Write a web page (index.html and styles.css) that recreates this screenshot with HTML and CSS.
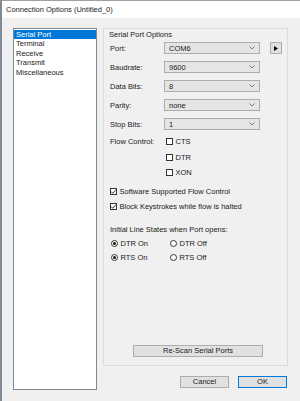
FILE: index.html
```html
<!DOCTYPE html>
<html>
<head>
<meta charset="utf-8">
<link rel="stylesheet" href="styles.css">
</head>
<body>
<div class="window">
  <div class="titlebar">Connection Options (Untitled_0)</div>
  <div class="content">
    <div class="listbox">
      <div class="item selected">Serial Port</div>
      <div class="item">Terminal</div>
      <div class="item">Receive</div>
      <div class="item">Transmit</div>
      <div class="item">Miscellaneous</div>
    </div>
    <div class="right">
      <div class="panel">
        <div class="panel-title">Serial Port Options</div>
        <div class="rows">
          <div class="row">
            <span class="label">Port:</span>
            <div class="combo"><span>COM6</span><svg class="chev" width="6" height="4" viewBox="0 0 6 4"><polyline points="0.5,0.5 3,3 5.5,0.5" fill="none" stroke="#707070" stroke-width="0.9"/></svg></div>
            <div class="arrowbtn"><svg width="4" height="5" viewBox="0 0 4 5"><polygon points="0,0 4,2.5 0,5" fill="#000"/></svg></div>
          </div>
          <div class="row">
            <span class="label">Baudrate:</span>
            <div class="combo"><span>9600</span><svg class="chev" width="6" height="4" viewBox="0 0 6 4"><polyline points="0.5,0.5 3,3 5.5,0.5" fill="none" stroke="#707070" stroke-width="0.9"/></svg></div>
          </div>
          <div class="row">
            <span class="label">Data Bits:</span>
            <div class="combo"><span>8</span><svg class="chev" width="6" height="4" viewBox="0 0 6 4"><polyline points="0.5,0.5 3,3 5.5,0.5" fill="none" stroke="#707070" stroke-width="0.9"/></svg></div>
          </div>
          <div class="row">
            <span class="label">Parity:</span>
            <div class="combo"><span>none</span><svg class="chev" width="6" height="4" viewBox="0 0 6 4"><polyline points="0.5,0.5 3,3 5.5,0.5" fill="none" stroke="#707070" stroke-width="0.9"/></svg></div>
          </div>
          <div class="row">
            <span class="label">Stop Bits:</span>
            <div class="combo"><span>1</span><svg class="chev" width="6" height="4" viewBox="0 0 6 4"><polyline points="0.5,0.5 3,3 5.5,0.5" fill="none" stroke="#707070" stroke-width="0.9"/></svg></div>
          </div>
        </div>
        <div class="flow">
          <span class="label flow-label">Flow Control:</span>
          <div class="flow-checks">
            <div class="check"><span class="box"></span>CTS</div>
            <div class="check"><span class="box"></span>DTR</div>
            <div class="check"><span class="box"></span>XON</div>
          </div>
        </div>
        <div class="opts">
          <div class="check"><span class="box"><svg width="7" height="7" viewBox="0 0 7 7"><polyline points="1,3.5 2.8,5.3 6,1.5" fill="none" stroke="#222" stroke-width="0.9"/></svg></span>Software Supported Flow Control</div>
          <div class="check"><span class="box"><svg width="7" height="7" viewBox="0 0 7 7"><polyline points="1,3.5 2.8,5.3 6,1.5" fill="none" stroke="#222" stroke-width="0.9"/></svg></span>Block Keystrokes while flow is halted</div>
        </div>
        <div class="initial">Initial Line States when Port opens:</div>
        <div class="radios">
          <div class="radio-row">
            <div class="radio"><span class="circle on"></span>DTR On</div>
            <div class="radio"><span class="circle"></span>DTR Off</div>
          </div>
          <div class="radio-row">
            <div class="radio"><span class="circle on"></span>RTS On</div>
            <div class="radio"><span class="circle"></span>RTS Off</div>
          </div>
        </div>
        <div class="rescan-wrap"><div class="btn rescan">Re-Scan Serial Ports</div></div>
      </div>
      <div class="buttons">
        <div class="btn">Cancel</div>
        <div class="btn ok">OK</div>
      </div>
    </div>
  </div>
</div>
</body>
</html>
```

FILE: styles.css
```css
* { box-sizing: border-box; }
html, body { margin: 0; padding: 0; }
body {
  width: 300px;
  height: 401px;
  overflow: hidden;
  font-family: "Liberation Sans", Arial, sans-serif;
  font-size: 7.5px;
  color: #1a1a1a;
  background: #f0f0f0;
}
.window {
  width: 300px;
  height: 401px;
  background: #f0f0f0;
  border-left: 2px solid #7d8a96;
  border-top: 1px solid #a0a0a0;
  display: flex;
  flex-direction: column;
}
.titlebar {
  height: 17px;
  background: #fff;
  padding-left: 4px;
  line-height: 17px;
  font-size: 7.5px;
}
.content {
  display: flex;
  padding: 10px 0 0 11px;
}
.listbox {
  width: 84px;
  height: 362px;
  background: #fff;
  border: 1px solid #828790;
  padding: 1px 0 0 0;
}
.item {
  height: 9.4px;
  line-height: 9.4px;
  padding-left: 2px;
  white-space: nowrap;
}
.item.selected {
  background: #0078d7;
  color: #fff;
}
.right {
  margin-left: 6px;
  width: 185px;
  display: flex;
  flex-direction: column;
}
.panel {
  height: 338px;
  border: 1px solid #dcdcdc;
  padding: 1px 0 0 5px;
  display: flex;
  flex-direction: column;
}
.panel-title {
  height: 9px;
  line-height: 9px;
}
.rows {
  display: flex;
  flex-direction: column;
  gap: 7px;
  margin-top: 3px;
  padding-left: 1px;
}
.row {
  display: flex;
  align-items: center;
  height: 12px;
}
.label {
  width: 54px;
  flex: none;
}
.combo {
  width: 96px;
  height: 12px;
  background: #e5e5e5;
  border: 1px solid #adadad;
  display: flex;
  align-items: center;
  justify-content: space-between;
  padding: 0 4px 0 4px;
}
.arrowbtn {
  margin-left: 10px;
  width: 12px;
  height: 12px;
  background: #e1e1e1;
  border: 1px solid #adadad;
  display: flex;
  align-items: center;
  justify-content: center;
}
.flow {
  display: flex;
  margin-top: 7px;
  padding-left: 1px;
}
.flow-label {
  width: 56px;
  height: 9px;
  line-height: 9px;
}
.flow-checks {
  display: flex;
  flex-direction: column;
  gap: 6.5px;
}
.check {
  display: flex;
  align-items: center;
  height: 9px;
  line-height: 9px;
  white-space: nowrap;
}
.box {
  width: 7px;
  height: 7px;
  border: 1px solid #333;
  background: #fff;
  margin-right: 2.5px;
  flex: none;
  position: relative;
}
.box svg {
  position: absolute;
  left: -1px;
  top: -1px;
}
.opts {
  display: flex;
  flex-direction: column;
  gap: 6px;
  margin-top: 10px;
  padding-left: 1px;
}
.initial {
  margin-top: 14px;
  padding-left: 1px;
  height: 9px;
  line-height: 9px;
}
.radios {
  display: flex;
  flex-direction: column;
  gap: 5px;
  margin-top: 5px;
  padding-left: 2px;
}
.radio-row {
  display: flex;
  height: 9px;
}
.radio {
  display: flex;
  align-items: center;
  width: 59px;
  white-space: nowrap;
}
.circle {
  width: 7px;
  height: 7px;
  border-radius: 50%;
  border: 1px solid #333;
  background: #fff;
  margin-right: 2.5px;
  flex: none;
  display: flex;
  align-items: center;
  justify-content: center;
}
.circle.on::after {
  content: "";
  width: 3px;
  height: 3px;
  border-radius: 50%;
  background: #111;
}
.rescan-wrap {
  margin-top: auto;
  margin-bottom: 8px;
  padding-left: 24px;
}
.btn {
  height: 12px;
  line-height: 10px;
  background: #e1e1e1;
  border: 1px solid #adadad;
  text-align: center;
  width: 49px;
}
.btn.rescan {
  width: 130px;
}
.buttons {
  display: flex;
  justify-content: flex-end;
  gap: 9px;
  margin-top: 10px;
  padding-right: 1px;
}
.btn.ok {
  border: 1px solid #0078d7;
}
```
